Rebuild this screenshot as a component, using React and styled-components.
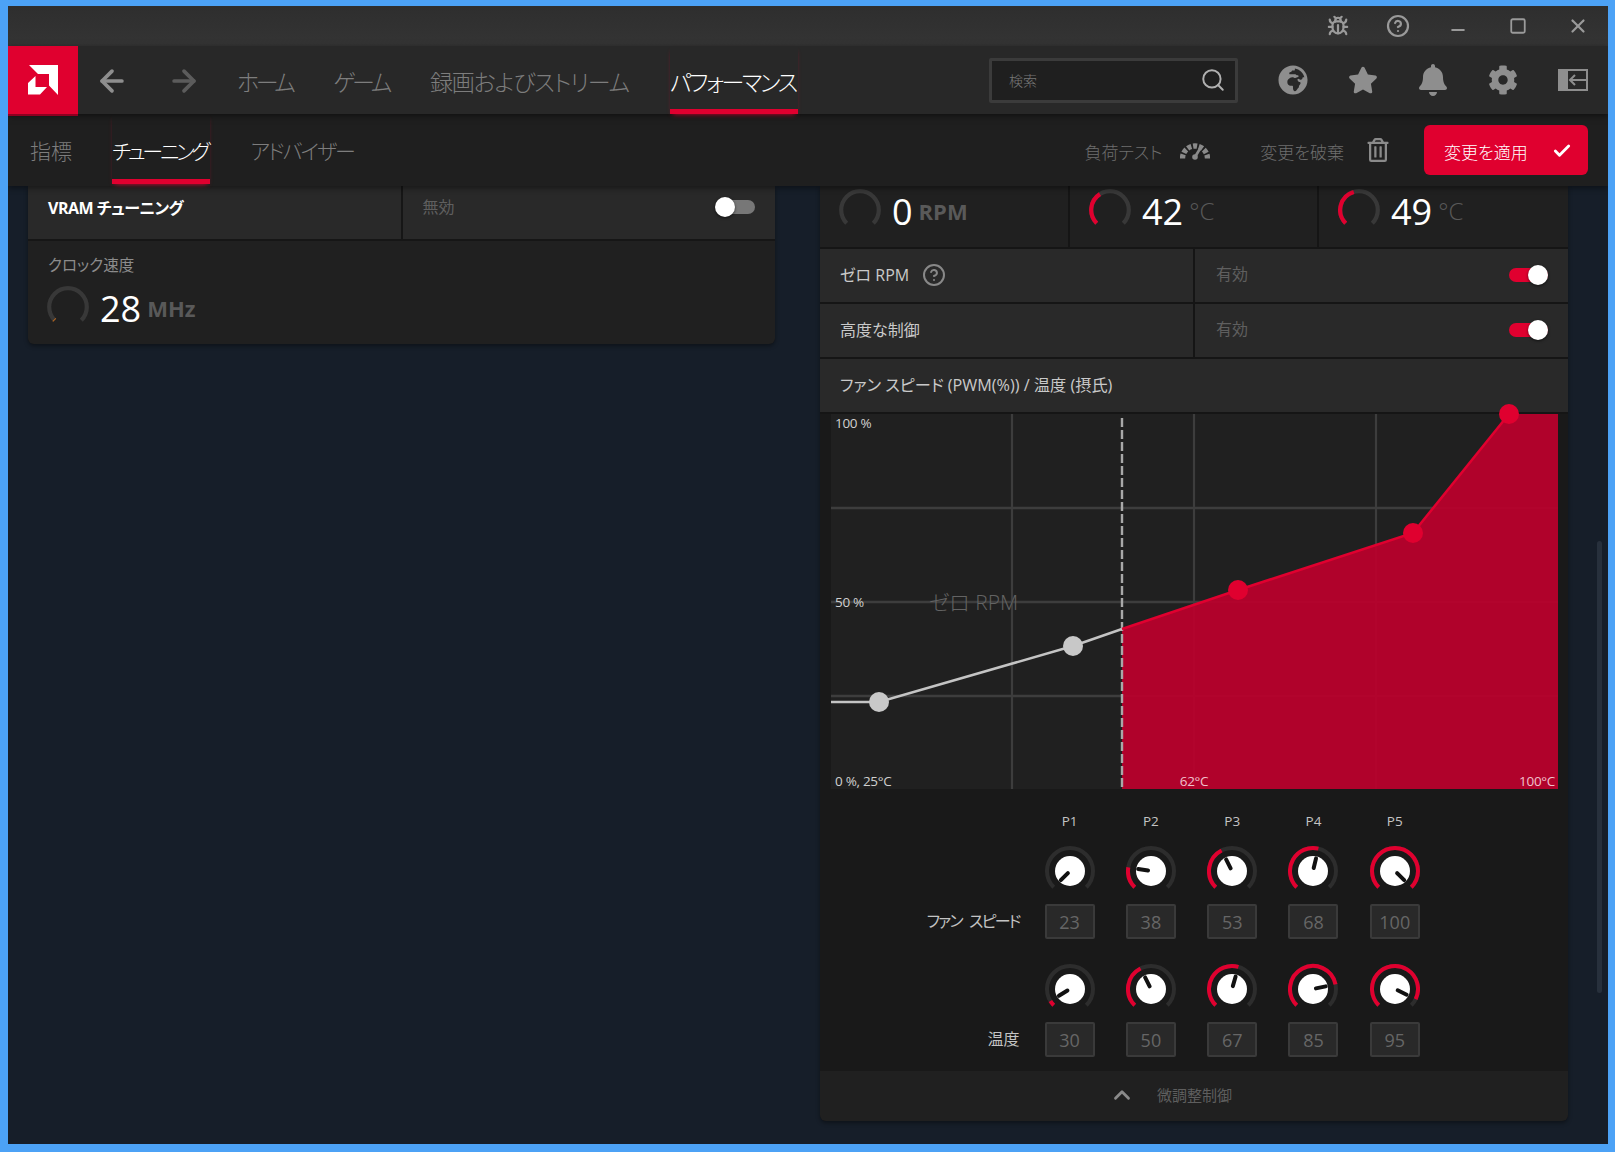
import React from "react";
import styled, { createGlobalStyle } from "styled-components";
import { ArrowLeft, ArrowRight, Bug, CircleHelp, Minus, Square, X, Search, Check, ChevronUp } from "lucide-react";
import { FaGlobeAfrica, FaStar, FaBell, FaCog, FaRegTrashAlt } from "react-icons/fa";

const Global = createGlobalStyle`
  html, body { margin: 0; padding: 0; background: #4ca2f6; }
  * { box-sizing: border-box; }
  body { font-family: "Open Sans", "Noto Sans CJK JP", sans-serif; font-feature-settings: "palt"; }
`;
const RED = "#e0002f";

const Page = styled.div`width:1615px;height:1152px;padding:6px 7px 8px 8px;background:#4ca2f6;`;
const Win = styled.div`width:1600px;height:1138px;display:flex;flex-direction:column;background:#161e29;overflow:hidden;position:relative;`;
const TitleBar = styled.div`height:40px;flex:none;display:flex;justify-content:flex-end;background:linear-gradient(#2e2e2e,#343434);`;
const TitleBtn = styled.div`width:60px;display:flex;align-items:center;justify-content:center;color:#9a9a9a;`;
const Nav = styled.div`height:68px;flex:none;display:flex;background:#282828;position:relative;z-index:3;box-shadow:0 2px 6px rgba(0,0,0,.5);`;
const Logo = styled.div`width:70px;height:70px;flex:none;background:${RED};border-bottom:2px solid #8e0020;display:flex;align-items:center;justify-content:center;`;
const NavArrow = styled.div`width:36px;height:68px;padding-top:2px;margin-left:${p=>p.$ml}px;display:flex;align-items:center;justify-content:center;color:${p=>p.$dim?"#5c5c5c":"#8e8e8e"};`;
const Tabs = styled.div`display:flex;gap:${p=>p.$gap}px;margin-left:${p=>p.$ml}px;height:100%;`;
const Tab = styled.div`
  display:flex;align-items:center;height:${p=>p.$h}px;padding-top:${p=>p.$pt}px;padding-right:${p=>p.$pr||0}px;
  font-size:${p=>p.$fs}px;font-weight:300;white-space:nowrap;letter-spacing:${p=>p.$ls||0}px;
  color:${p=>p.$active?"#fff":"#7d7d7d"};
  border-bottom:5px solid ${p=>p.$active?RED:"transparent"};
  ${p=>p.$active?`box-shadow:0 3px 5px -3px ${RED};`:""}
`;
const SearchBox = styled.div`margin-left:auto;margin-right:20px;margin-top:12px;width:249px;height:45px;border:3px solid #3b3b3b;border-radius:2px;background:#1f1f1f;display:flex;align-items:center;justify-content:space-between;padding:0 9px 2px 17px;color:#777;font-size:14px;font-weight:300;`;
const SearchIcon = styled(Search)`color:#b0b0b0;`;
const NavIcon = styled.div`width:70px;height:68px;display:flex;align-items:center;justify-content:center;color:#8e8e8e;`;
const SubNav = styled.div`height:72px;flex:none;display:flex;background:#1f1f1f;padding:0 20px 0 22px;position:relative;z-index:2;box-shadow:0 2px 6px rgba(0,0,0,.45);`;
const SubActions = styled.div`margin-left:auto;display:flex;align-items:center;height:100%;color:#6e6e6e;padding-bottom:0;`;
const ActionText = styled.span`font-size:${p=>p.$fs||17}px;font-weight:300;white-space:nowrap;margin-top:3px;color:#6e6e6e;margin-right:${p=>p.$mr}px;`;
const ActionIcon = styled.div`display:flex;align-items:center;color:#8a8a8a;margin-right:${p=>p.$mr}px;`;
const ApplyBtn = styled.div`width:164px;height:50px;background:${RED};border-radius:6px;display:flex;align-items:center;justify-content:space-between;padding:2px 16px 0 20px;color:#fff;font-size:17px;font-weight:300;`;

const Content = styled.div`flex:1;display:flex;align-items:flex-start;min-height:0;background:#161e29;position:relative;`;
const LeftCard = styled.div`width:747px;margin-left:20px;background:#161616;border-radius:0 0 6px 6px;box-shadow:0 2px 4px rgba(0,0,0,.4);overflow:hidden;display:flex;flex-direction:column;gap:2px;`;
const RightCard = styled.div`width:748px;margin-left:45px;background:#151515;border-radius:0 0 6px 6px;box-shadow:0 2px 4px rgba(0,0,0,.4);overflow:hidden;display:flex;flex-direction:column;gap:2px;`;
const SplitRow = styled.div`display:grid;grid-template-columns:1fr 1fr;gap:2px;height:${p=>p.$h}px;`;
const Cell = styled.div`background:#292929;display:flex;align-items:center;padding:${p=>p.$pad};justify-content:${p=>p.$between?"space-between":"flex-start"};`;
const RowLabel = styled.span`font-size:16px;color:${p=>p.$bright?"#fff":"#c9c9c9"};font-weight:${p=>p.$bold?700:400};white-space:nowrap;letter-spacing:${p=>p.$ls||0}px;`;
const RowValue = styled.span`font-size:16px;color:#5f5f5f;font-weight:400;`;
const HelpIcon = styled(CircleHelp)`color:#888;margin-left:13px;margin-top:3px;`;
const Track = styled.div`position:relative;width:39px;height:14px;border-radius:7px;margin-top:${p=>p.$mt||0}px;background:${p=>p.$on?RED:"#777"};`;
const Thumb = styled.div`position:absolute;top:-3px;${p=>p.$on?"right:0":"left:-1px"};width:20px;height:20px;border-radius:50%;background:#fff;box-shadow:0 1px 3px rgba(0,0,0,.6);`;
const ClockRow = styled.div`height:103px;background:#202020;padding:13px 20px 0 19px;`;
const ClockLabel = styled.div`font-size:15.5px;color:#8c8c8c;line-height:22px;padding-left:1px;`;
const MetricLine = styled.div`display:flex;align-items:flex-start;margin-top:${p=>p.$mt||0}px;`;
const Val = styled.span`font-size:36px;font-weight:400;color:#fff;line-height:44px;margin-left:11px;position:relative;top:1px;`;
const Unit = styled.span`font-size:${p=>p.$c?24:22}px;font-weight:${p=>p.$c?300:700};color:#595959;margin-left:6px;line-height:44px;`;
const TileRow = styled.div`display:grid;grid-template-columns:248px 247px 1fr;gap:2px;height:61px;`;
const Tile = styled.div`background:#202020;display:flex;align-items:flex-start;padding:3px 0 0 19px;`;
const FanHeader = styled.div`height:53px;background:#292929;display:flex;align-items:center;padding:0 20px 4px;font-size:16.2px;color:#c9c9c9;white-space:nowrap;`;
const ChartWrap = styled.div`background:#191919;padding:0 10px 0 11px;position:relative;`;
const ChartSvg = styled.svg`display:block;width:727px;height:375px;overflow:visible;`;
const KnobGrid = styled.div`
  background:#191919;display:grid;padding:24px 0 0;height:282px;margin-top:-2px;
  grid-template-rows:32px 59px 59px 59px 35px;
  grid-template-columns:199.6px 75px repeat(4,81.3px);
  & > *:nth-child(6n+2) { margin-left:25px; }
  & > *:not(:nth-child(6n+1)):not(:nth-child(6n+2)) { margin-left:31.3px; }
`;
const PHead = styled.div`width:50px;text-align:center;font-size:13.5px;color:#c4c4c4;line-height:16px;`;
const KnobBox = styled.div`width:50px;height:50px;`;
const NumBox = styled.div`width:50px;height:35px;border:2px solid #3a3a3a;border-radius:2px;background:#292929;color:#666;font-size:18px;font-weight:400;display:flex;align-items:center;justify-content:center;`;
const SideLabel = styled.div`text-align:right;font-size:16px;color:#c4c4c4;line-height:35px;white-space:nowrap;letter-spacing:${p=>p.$ls||0}px;word-spacing:${p=>p.$ws||0}px;`;
const Footer = styled.div`height:50px;background:#202020;display:flex;align-items:center;color:#5e5e5e;font-size:15px;padding:0 0 3px 289px;gap:22px;margin-top:-2px;`;
const Chevron = styled(ChevronUp)`color:#8a8a8a;`;
const ScrollThumb = styled.div`position:absolute;top:355px;left:1589px;width:5px;height:452px;border-radius:3px;background:#27303c;`;

function pt(cx,cy,r,deg){const a=(deg-90)*Math.PI/180;return [cx+r*Math.cos(a),cy+r*Math.sin(a)];}
function arc(cx,cy,r,a0,a1){const [x0,y0]=pt(cx,cy,r,a0),[x1,y1]=pt(cx,cy,r,a1);const large=a1-a0>180?1:0;return `M${x0} ${y0}A${r} ${r} 0 ${large} 1 ${x1} ${y1}`;}

function Gauge({frac,color=RED,track="#383838"}){
  return <svg width="42" height="42" viewBox="0 0 42 42" style={{flex:"none"}}>
    <path d={arc(21,21,18.8,-135,135)} fill="none" stroke={track} strokeWidth="4.2" strokeLinecap="butt"/>
    {frac>0&&<path d={arc(21,21,18.8,-135,-135+270*frac)} fill="none" stroke={color} strokeWidth="4.2"/>}
  </svg>;
}
function Knob({frac}){
  const a=-135+270*frac;const [x0,y0]=pt(25,26,3,a),[x1,y1]=pt(25,26,13,a);
  return <KnobBox><svg width="50" height="50" viewBox="0 0 50 50">
    <path d={arc(25,26,23,-135,135)} fill="none" stroke="#2d2d2d" strokeWidth="4"/>
    {frac>0&&<path d={arc(25,26,23,-135,-135+270*frac)} fill="none" stroke={RED} strokeWidth="4"/>}
    <circle cx="25" cy="26" r="15" fill="#fff"/>
    <line x1={x0} y1={y0} x2={x1} y2={y1} stroke="#111" strokeWidth="4" strokeLinecap="round"/>
  </svg></KnobBox>;
}
function Toggle({on,mt}){return <Track $on={on} $mt={mt}><Thumb $on={on}/></Track>;}
const AmdLogo=()=>(<svg width="32" height="32" viewBox="0 0 32 32" fill="#fff">
  <polygon points="2,1 31,1 31,31 22,21.5 22,10 11,10"/>
  <polygon points="8.5,12 1,19 1,30.5 13,30.5 20,23 8.5,23"/>
</svg>);
const PanelIcon=()=>(<svg width="30" height="22" viewBox="0 0 30 22">
  <rect x="0" y="0" width="30" height="22" fill="currentColor"/>
  <rect x="10" y="2" width="18" height="18" fill="#282828"/>
  <path d="M29 11H12M17 6l-5 5 5 5" fill="none" stroke="currentColor" strokeWidth="2"/>
</svg>);
const Tacho=()=>(<svg width="30" height="20" viewBox="0 0 30 20" fill="none">
  <path d="M2.5 18.5A12.5 12.5 0 0 1 27.5 18.5" stroke="currentColor" strokeWidth="5.4" pathLength="100" strokeDasharray="10.5 4.5"/>
  <path d="M15 17L21 7" stroke="currentColor" strokeWidth="2.6"/>
  <circle cx="15" cy="17" r="2.8" fill="currentColor"/>
</svg>);
function Chart(){
  const ox=831,oy=413,X=x=>x-ox,Y=y=>y-oy-1;
  const grid="#3d3d3d";
  return <ChartSvg viewBox="0 0 727 375" fontFamily="'Open Sans','Noto Sans CJK JP',sans-serif">
    <rect width="727" height="375" fill="#202020"/>
    {[181,363,545].map(x=><line key={x} x1={x} x2={x} y1="0" y2="375" stroke={grid} strokeWidth="2.2"/>)}
    {[94,188,282].map(y=><line key={y} x1="0" x2="727" y1={y} y2={y} stroke={grid} strokeWidth="2.6"/>)}
    <polygon points={`${X(1122)},${Y(629)} ${X(1238)},${Y(590)} ${X(1413)},${Y(533)} ${X(1509)},0 727,0 727,375 ${X(1122)},375`} fill="#bb002c" fillOpacity=".93"/>
    <line x1={X(1122)} x2={X(1122)} y1="4" y2="375" stroke="#a8a8a8" strokeWidth="2.4" strokeDasharray="9 3"/>
    <polyline points={`0,${Y(702)} ${X(879)},${Y(702)} ${X(1073)},${Y(646)} ${X(1122)},${Y(629)}`} fill="none" stroke="#c4c4c4" strokeWidth="2.5"/>
    <polyline points={`${X(1122)},${Y(629)} ${X(1238)},${Y(590)} ${X(1413)},${Y(533)} ${X(1509)},0`} fill="none" stroke={RED} strokeWidth="2.5"/>
    <circle cx={X(879)} cy={Y(702)} r="10" fill="#c8c8c8"/>
    <circle cx={X(1073)} cy={Y(646)} r="10" fill="#c8c8c8"/>
    <circle cx={X(1238)} cy={Y(590)} r="10" fill={RED}/>
    <circle cx={X(1413)} cy={Y(533)} r="10" fill={RED}/>
    <circle cx={X(1509)} cy="0" r="10" fill={RED}/>
    <text x="4" y="14" fontSize="13.5" letterSpacing="-0.3" fill="#d0d0d0">100 %</text>
    <text x="4" y="193" fontSize="13.5" letterSpacing="-0.3" fill="#d0d0d0">50 %</text>
    <text x="4" y="372" fontSize="13.5" letterSpacing="-0.3" fill="#d0d0d0">0 %, 25°C</text>
    <text x="363" y="372" fontSize="13.5" letterSpacing="-0.3" fill="#f0c0cc" textAnchor="middle">62°C</text>
    <text x="724" y="372" fontSize="13.5" letterSpacing="-0.3" fill="#f0c0cc" textAnchor="end">100°C</text>
    <text x="98" y="196" fontSize="21" fontWeight="300" fill="#636363">ゼロ RPM</text>
  </ChartSvg>;
}
const fan=[[23,0],[38,.2],[53,.4],[68,.55],[100,1]];
const temp=[[30,.05],[50,.4],[67,.56],[85,.79],[95,.93]];
export default function App(){
  return <Page><Global/><Win>
    <TitleBar>
      <TitleBtn><Bug size={22} strokeWidth={2.4}/></TitleBtn>
      <TitleBtn><CircleHelp size={24} strokeWidth={2.2}/></TitleBtn>
      <TitleBtn><Minus size={20} strokeWidth={2.4} style={{marginTop:8}}/></TitleBtn>
      <TitleBtn><Square size={18} strokeWidth={2.4}/></TitleBtn>
      <TitleBtn><X size={22} strokeWidth={2.4}/></TitleBtn>
    </TitleBar>
    <Nav>
      <Logo><AmdLogo/></Logo>
      <NavArrow $ml={16}><ArrowLeft size={34} strokeWidth={2.6}/></NavArrow>
      <NavArrow $ml={36} $dim><ArrowRight size={34} strokeWidth={2.6}/></NavArrow>
      <Tabs $gap={41} $ml={35}>
        <Tab $h={68} $pt={7} $fs={23} $ls={-3.5}>ホーム</Tab>
        <Tab $h={68} $pt={7} $fs={23} $ls={-3.4}>ゲーム</Tab>
        <Tab $h={68} $pt={7} $fs={23} $ls={-1.2}>録画およびストリーム</Tab>
        <Tab $h={68} $pt={7} $fs={23} $ls={-2.4} $pr={2} $active>パフォーマンス</Tab>
      </Tabs>
      <SearchBox>検索<SearchIcon size={26} strokeWidth={1.8}/></SearchBox>
      <NavIcon><FaGlobeAfrica size={30}/></NavIcon>
      <NavIcon><FaStar size={30}/></NavIcon>
      <NavIcon><FaBell size={32}/></NavIcon>
      <NavIcon><FaCog size={30}/></NavIcon>
      <NavIcon><PanelIcon/></NavIcon>
    </Nav>
    <SubNav>
      <Tabs $gap={40} $ml={0}>
        <Tab $h={70} $pt={6} $fs={21}>指標</Tab>
        <Tab $h={70} $pt={6} $fs={21} $ls={-3.2} $pr={3} $active>チューニング</Tab>
        <Tab $h={70} $pt={6} $fs={21} $ls={-2}>アドバイザー</Tab>
      </Tabs>
      <SubActions>
        <ActionText $mr={18}>負荷テスト</ActionText>
        <ActionIcon $mr={50}><Tacho/></ActionIcon>
        <ActionText $mr={22}>変更を破棄</ActionText>
        <ActionIcon $mr={34}><FaRegTrashAlt size={24}/></ActionIcon>
        <ApplyBtn>変更を適用<Check size={20} strokeWidth={3.4}/></ApplyBtn>
      </SubActions>
    </SubNav>
    <Content>
      <LeftCard>
        <SplitRow $h={53}>
          <Cell $pad="0 20px 12px"><RowLabel $bright $bold $ls={-0.5}>VRAM チューニング</RowLabel></Cell>
          <Cell $pad="0 20px 14px" $between><RowValue>無効</RowValue><Toggle mt={2}/></Cell>
        </SplitRow>
        <ClockRow>
          <ClockLabel>クロック速度</ClockLabel>
          <MetricLine $mt={10}><Gauge frac={.012} color="#b5651d"/><Val>28</Val><Unit>MHz</Unit></MetricLine>
        </ClockRow>
      </LeftCard>
      <RightCard>
        <TileRow>
          <Tile><Gauge frac={0}/><Val>0</Val><Unit>RPM</Unit></Tile>
          <Tile><Gauge frac={.38}/><Val>42</Val><Unit $c>°C</Unit></Tile>
          <Tile><Gauge frac={.44}/><Val>49</Val><Unit $c>°C</Unit></Tile>
        </TileRow>
        <SplitRow $h={53}>
          <Cell $pad="0 20px 4px"><RowLabel>ゼロ RPM</RowLabel><HelpIcon size={24} strokeWidth={2}/></Cell>
          <Cell $pad="0 20px 6px 21px" $between><RowValue>有効</RowValue><Toggle on mt={4}/></Cell>
        </SplitRow>
        <SplitRow $h={53}>
          <Cell $pad="0 20px 4px"><RowLabel>高度な制御</RowLabel></Cell>
          <Cell $pad="0 20px 6px 21px" $between><RowValue>有効</RowValue><Toggle on mt={4}/></Cell>
        </SplitRow>
        <FanHeader>ファン スピード (PWM(%)) / 温度 (摂氏)</FanHeader>
        <ChartWrap><Chart/></ChartWrap>
        <KnobGrid>
          <div/>{["P1","P2","P3","P4","P5"].map(p=><PHead key={p}>{p}</PHead>)}
          <div/>{fan.map(([v,f])=><Knob key={v} frac={f}/>)}
          <SideLabel $ls={-1.8} $ws={5}>ファン スピード</SideLabel>{fan.map(([v])=><NumBox key={v}>{v}</NumBox>)}
          <div/>{temp.map(([v,f])=><Knob key={v} frac={f}/>)}
          <SideLabel>温度</SideLabel>{temp.map(([v])=><NumBox key={v}>{v}</NumBox>)}
        </KnobGrid>
        <Footer><Chevron size={26} strokeWidth={2.6}/>微調整制御</Footer>
      </RightCard>
      <ScrollThumb/>
    </Content>
  </Win></Page>;
}
